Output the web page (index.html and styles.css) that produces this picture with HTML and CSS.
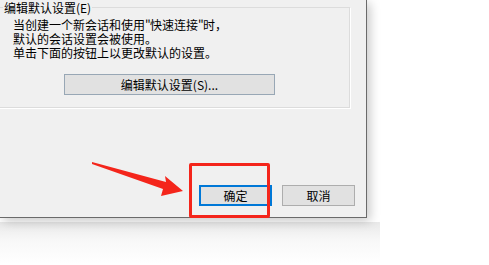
FILE: index.html
```html
<!DOCTYPE html>
<html lang="zh-CN">
<head>
<meta charset="utf-8">
<title>默认会话设置</title>
<link rel="stylesheet" href="styles.css">
</head>
<body>
<div class="screen">
  <div class="dialog">
    <fieldset class="group">
      <legend class="legend">编辑默认设置(E)</legend>
      <div class="desc">
        <div>当创建一个新会话和使用<span class="q">"</span>快速连接<span class="q">"</span>时，</div>
        <div>默认的会话设置会被使用。</div>
        <div>单击下面的按钮上以更改默认的设置。</div>
      </div>
      <div class="edit-row">
        <button class="btn btn-edit">编辑默认设置(S)...</button>
      </div>
    </fieldset>
    <div class="actions">
      <button class="btn btn-ok">确定</button>
      <button class="btn">取消</button>
    </div>
    <div class="mark-box"></div>
    <svg class="mark-arrow" width="100" height="45" viewBox="0 0 100 45">
      <polygon points="0,1 74,21 73,15 91,30 69,35 71,28 0,3" fill="#f4251b"/>
    </svg>
  </div>
  <div class="below"></div>
</div>
</body>
</html>
```
FILE: styles.css
```css
html, body {
  margin: 0;
  padding: 0;
  background: #ffffff;
  overflow: hidden;
}
.screen {
  width: 489px;
  height: 265px;
  font-family: "Noto Sans CJK SC", "Microsoft YaHei", sans-serif;
  font-size: 12px;
  color: #000;
}
.dialog {
  position: relative;
  width: 366px;
  height: 217px;
  background: #f0f0f0;
  border-right: 1px solid #6a6a6a;
  border-bottom: 1px solid #6a6a6a;
  box-shadow: 3px 3px 10px rgba(0, 0, 0, 0.22);
}
.group {
  margin: 0 0 0 -10px;
  padding: 0 0 0 12px;
  width: 360px;
  height: 108px;
  box-sizing: border-box;
  border: 1px solid #dcdcdc;
  box-shadow: 1px 1px 0 #ffffff;
  min-width: 0;
}
.legend {
  padding: 0 1px;
  line-height: 15px;
  height: 15px;
}
.desc {
  margin: 3px 0 0 10px;
  line-height: 14px;
  white-space: nowrap;
}
.q {
  display: inline-block;
  width: 5px;
  text-align: center;
}
.edit-row {
  margin: 14px 0 0 61px;
}
.btn {
  font-family: "Noto Sans CJK SC", "Microsoft YaHei", sans-serif;
  font-size: 12px;
  height: 21px;
  width: 73px;
  padding: 0;
  margin: 0;
  background: #e1e1e1;
  border: 1px solid #adadad;
  color: #000;
  line-height: 17px;
  box-sizing: border-box;
}
.btn-edit {
  width: 211px;
  border-color: #98a7b5;
}
.btn-ok {
  border: 2px solid #0078d7;
}
.actions {
  display: flex;
  justify-content: flex-end;
  gap: 10px;
  margin: 77px 11px 0 0;
}
.mark-box {
  position: absolute;
  left: 189px;
  top: 163px;
  width: 81px;
  height: 55px;
  box-sizing: border-box;
  border: 3px solid #f4251b;
  border-radius: 2px;
}
.mark-arrow {
  position: absolute;
  left: 92px;
  top: 161px;
}
.below {
  margin-top: 4px;
  width: 380px;
  height: 42px;
  background: linear-gradient(#e9e9e9, #f8f8f8 45%, #ffffff);
}
```
